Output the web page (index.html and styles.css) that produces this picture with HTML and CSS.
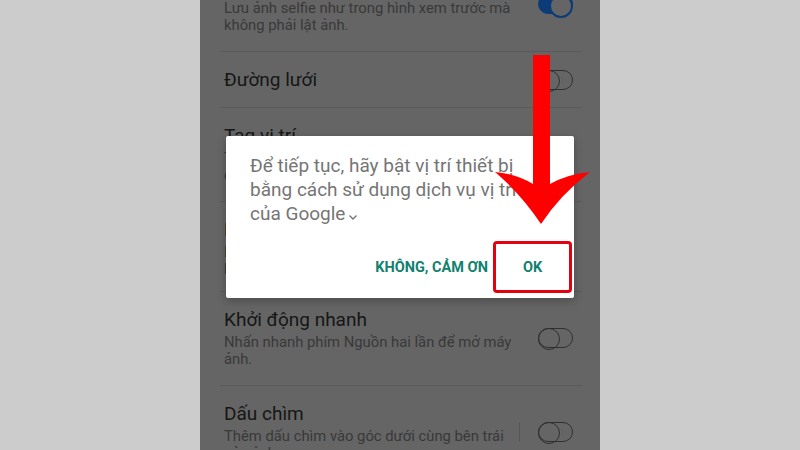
FILE: index.html
```html
<!DOCTYPE html>
<html lang="vi">
<head>
<meta charset="utf-8">
<title>Cài đặt máy ảnh</title>
<link rel="stylesheet" href="styles.css">
</head>
<body>
<div class="stage">
  <div class="phone">
    <div class="list">
      <div class="row first">
        <div class="texts">
          <div class="title">Lưu ảnh như xem trước</div>
          <div class="sub">Lưu ảnh selfie như trong hình xem trước mà<br>không phải lật ảnh.</div>
        </div>
        <span class="toggle on"></span>
      </div>
      <div class="row single">
        <div class="texts">
          <div class="title">Đường lưới</div>
        </div>
        <span class="toggle"></span>
      </div>
      <div class="row">
        <div class="texts">
          <div class="title">Tag vị trí</div>
          <div class="sub">Thêm thẻ vị trí GPS vào ảnh và video<br>của bạn.</div>
        </div>
        <span class="toggle"></span>
      </div>
      <div class="row tight">
        <div class="texts">
          <div class="title">Phím âm lượng</div>
          <div class="sub">Dùng phím âm lượng để chụp ảnh<br>hoặc quay video.</div>
        </div>
        <span class="toggle"></span>
      </div>
      <div class="row">
        <div class="texts">
          <div class="title">Khởi động nhanh</div>
          <div class="sub">Nhấn nhanh phím Nguồn hai lần để mở máy<br>ảnh.</div>
        </div>
        <span class="toggle"></span>
      </div>
      <div class="row">
        <div class="texts">
          <div class="title">Dấu chìm</div>
          <div class="sub">Thêm dấu chìm vào góc dưới cùng bên trái<br>của ảnh.</div>
        </div>
        <span class="vsep"></span>
        <span class="toggle"></span>
      </div>
    </div>

    <div class="dialog">
      <p class="msg">Để tiếp tục, hãy bật vị trí thiết bị<br>bằng cách sử dụng dịch vụ vị trí<br>của Google<svg class="chev" width="10" height="8" viewBox="0 0 10 8"><path d="M1.5 2.5 L5 6 L8.5 2.5" fill="none" stroke="#757575" stroke-width="1.4"/></svg></p>
      <div class="actions">
        <button class="btn">KHÔNG, CẢM ƠN</button>
        <button class="btn ok">OK</button>
      </div>
    </div>

    <svg class="arrow" width="400" height="450" viewBox="200 0 400 450">
      <path d="M533 55 L550 55 L550 184 Q568 174 590 172 Q560 195 541 224 Q522 195 495 172 Q516 174 533 184 Z" fill="#ff0000"/>
    </svg>
  </div>
</div>
</body>
</html>
```
FILE: styles.css
```css
* { box-sizing: border-box; }
html, body { margin: 0; padding: 0; }
body {
  width: 800px;
  height: 450px;
  overflow: hidden;
  background: #cccccc;
  font-family: Roboto, "Noto Sans", sans-serif;
}
.stage {
  display: flex;
  justify-content: center;
  height: 450px;
}
.phone {
  position: relative;
  width: 400px;
  height: 450px;
  background: #656565;
  overflow: hidden;
}
.list {
  margin-top: -42px;
  padding: 0 18px 0 20px;
}
.row {
  display: flex;
  align-items: center;
  padding: 16px 9px 17px 4px;
  border-top: 1px solid #5a5a5a;
}
.row.first { border-top: none; }
.row.single { padding-bottom: 15px; }
.row.tight { padding-bottom: 13px; }
.texts { flex: 1; }
.title {
  font-size: 19px;
  line-height: 24px;
  color: #161616;
}
.sub {
  margin-top: 2px;
  font-size: 14.8px;
  line-height: 17px;
  color: #393939;
}
.vsep {
  width: 1px;
  height: 20px;
  background: #575757;
  margin-right: 18px;
}
.toggle {
  width: 35px;
  height: 20px;
  border: 1px solid #303030;
  border-radius: 10px;
  position: relative;
  flex: none;
}
.toggle::before {
  content: "";
  position: absolute;
  left: -1px;
  top: -1px;
  width: 20px;
  height: 20px;
  border: 1px solid #303030;
  border-radius: 50%;
}
.toggle.on {
  background: #0c3c78;
  border-color: #0c3c78;
}
.toggle.on::before {
  left: auto;
  right: -1px;
  background: #656565;
  border: 2px solid #0c3c78;
}
.dialog {
  position: absolute;
  left: 26px;
  top: 136px;
  width: 348px;
  height: 162px;
  background: #ffffff;
  border-radius: 2px;
  box-shadow: 0 3px 8px rgba(0,0,0,0.25);
  display: flex;
  flex-direction: column;
}
.msg {
  margin: 0;
  padding: 18px 20px 0 24px;
  font-size: 19px;
  line-height: 24px;
  color: #757575;
  white-space: nowrap;
}
.chev { margin-left: 3px; vertical-align: -1px; }
.actions {
  margin-top: auto;
  display: flex;
  justify-content: flex-end;
  align-items: center;
  gap: 2px;
  padding: 0 2px 5px 0;
}
.btn {
  font-family: Roboto, "Noto Sans", sans-serif;
  font-weight: bold;
  font-size: 14.5px;
  color: #11806f;
  background: none;
  border: 3px solid transparent;
  padding: 0;
  height: 52px;
  cursor: pointer;
}
.btn.ok {
  width: 79px;
  border-color: #e3000f;
  border-radius: 4px;
}
.arrow {
  position: absolute;
  left: 0;
  top: 0;
  pointer-events: none;
}
```
